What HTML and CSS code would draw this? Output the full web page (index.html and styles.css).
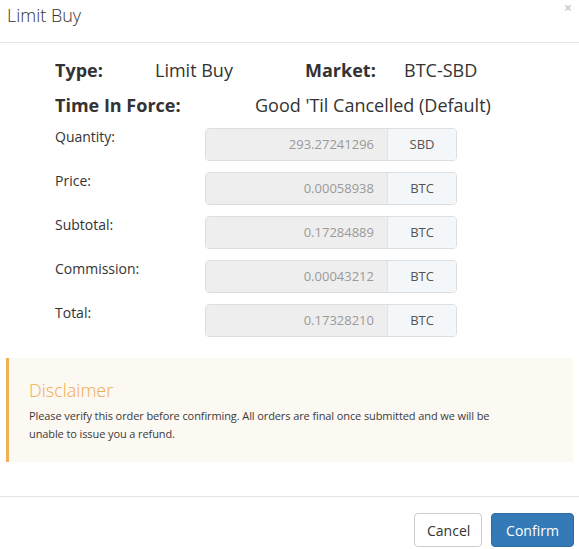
FILE: index.html
```html
<!DOCTYPE html>
<html>
<head>
<meta charset="utf-8">
<link rel="stylesheet" href="styles.css">
</head>
<body>
<div class="modal">
  <div class="modal-header">
    <h4 class="title">Limit Buy</h4>
    <span class="close">×</span>
  </div>
  <div class="modal-body">
    <div class="summary">
      <div class="sum-row">
        <span class="k k-type">Type:</span>
        <span class="v v-type">Limit Buy</span>
        <span class="k k-market">Market:</span>
        <span class="v">BTC-SBD</span>
      </div>
      <div class="sum-row">
        <span class="k k-tif">Time In Force:</span>
        <span class="v">Good 'Til Cancelled (Default)</span>
      </div>
    </div>
    <div class="fields">
      <div class="field">
        <label class="lbl">Quantity:</label>
        <div class="group"><div class="inp">293.27241296</div><div class="addon">SBD</div></div>
      </div>
      <div class="field">
        <label class="lbl">Price:</label>
        <div class="group"><div class="inp">0.00058938</div><div class="addon">BTC</div></div>
      </div>
      <div class="field">
        <label class="lbl">Subtotal:</label>
        <div class="group"><div class="inp">0.17284889</div><div class="addon">BTC</div></div>
      </div>
      <div class="field">
        <label class="lbl">Commission:</label>
        <div class="group"><div class="inp">0.00043212</div><div class="addon">BTC</div></div>
      </div>
      <div class="field">
        <label class="lbl">Total:</label>
        <div class="group"><div class="inp">0.17328210</div><div class="addon">BTC</div></div>
      </div>
    </div>
    <div class="disclaimer">
      <h4 class="d-title">Disclaimer</h4>
      <p class="d-text">Please verify this order before confirming. All orders are final once submitted and we will be unable to issue you a refund.</p>
    </div>
  </div>
  <div class="modal-footer">
    <button class="btn btn-default">Cancel</button>
    <button class="btn btn-primary">Confirm</button>
  </div>
</div>
</body>
</html>
```
FILE: styles.css
```css
* { box-sizing: border-box; }
html, body { margin: 0; padding: 0; background: #fff; }
body {
  font-family: "Open Sans", "Noto Sans", sans-serif;
  color: #333;
  width: 579px;
  height: 549px;
  overflow: hidden;
}
.modal { width: 579px; }
.modal-header {
  position: relative;
  height: 43px;
  border-bottom: 1px solid #e5e5e5;
  padding: 3px 7px 0;
}
.title {
  margin: 0;
  font-size: 18px;
  font-weight: 300;
  line-height: 25px;
  color: #333;
}
.close {
  position: absolute;
  right: 7px;
  top: 1px;
  font-size: 14px;
  font-weight: 700;
  color: #000;
  opacity: 0.2;
  line-height: 14px;
}
.modal-body { padding: 15px 0 0; }
.summary { padding-left: 55px; }
.sum-row {
  display: flex;
  align-items: baseline;
  font-size: 18px;
  line-height: 24px;
  height: 35px;
}
.k { font-weight: 700; color: #333; }
.v { color: #333; }
.k-type { width: 100px; }
.v-type { width: 150px; }
.k-market { width: 99px; }
.k-tif { width: 200px; }
.fields { padding-left: 55px; }
.field {
  display: flex;
  align-items: flex-start;
  height: 44px;
}
.lbl {
  width: 150px;
  font-size: 14px;
  line-height: 18px;
  color: #333;
}
.group {
  display: flex;
  height: 33px;
  border: 1px solid #dcdfe2;
  border-radius: 4px;
  overflow: hidden;
  width: 252px;
}
.inp {
  width: 182px;
  background: #eee;
  color: #9a9a9a;
  font-size: 13px;
  text-align: right;
  line-height: 31px;
  padding-right: 13px;
  border-right: 1px solid #dde6ee;
}
.addon {
  flex: 1;
  background: #f4f7f9;
  color: #555;
  font-size: 13px;
  text-align: center;
  line-height: 31px;
}
.disclaimer {
  margin: 10px 6px 0 6px;
  height: 104px;
  background: #fcf8f2;
  border-left: 3px solid #eeb15a;
  padding: 19px 70px 0 20px;
}
.d-title {
  margin: 0;
  font-size: 18px;
  font-weight: 300;
  color: #f0ad4e;
  line-height: 26px;
}
.d-text {
  margin: 4px 0 0;
  font-size: 11px;
  line-height: 18px;
  color: #3a3a3a;
  letter-spacing: -0.1px;
}
.modal-footer {
  margin-top: 34px;
  border-top: 1px solid #e5e5e5;
  display: flex;
  justify-content: flex-end;
  gap: 9px;
  padding: 16px 5px 0;
}
.btn {
  font-family: "Open Sans", "Noto Sans", sans-serif;
  font-size: 14px;
  height: 34px;
  border-radius: 4px;
  padding: 0 12px;
  cursor: pointer;
}
.btn-default {
  background: #fff;
  border: 1px solid #ccc;
  color: #333;
  width: 68px;
}
.btn-primary {
  background: #337ab7;
  border: 1px solid #2e6da4;
  color: #fff;
  width: 83px;
}
```
